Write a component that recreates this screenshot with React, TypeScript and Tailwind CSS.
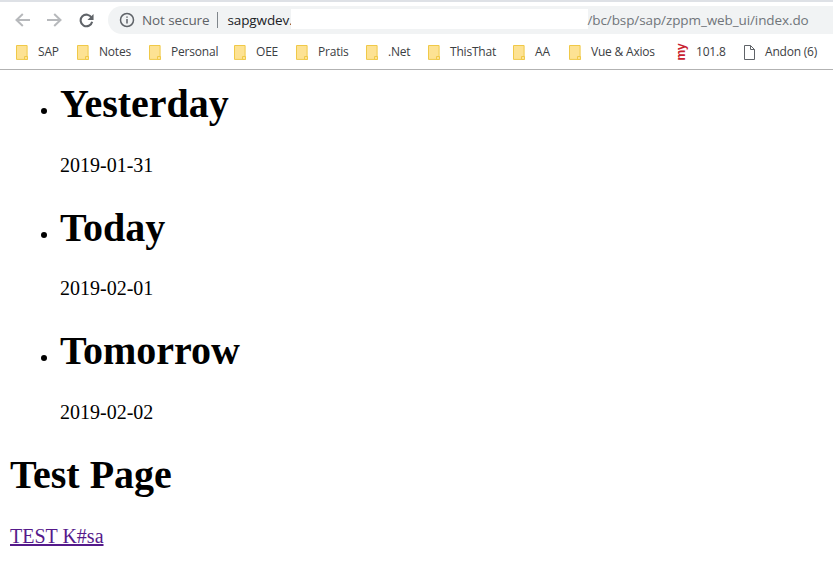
const bookmarks = [
  { name: "SAP", width: "w-[61px]" },
  { name: "Notes", width: "w-[72px]" },
  { name: "Personal", width: "w-[85px]" },
  { name: "OEE", width: "w-[62px]" },
  { name: "Pratis", width: "w-[70px]" },
  { name: ".Net", width: "w-[62px]" },
  { name: "ThisThat", width: "w-[85px]" },
  { name: "AA", width: "w-[56px]" },
];

const days = [
  { title: "Yesterday", date: "2019-01-31" },
  { title: "Today", date: "2019-02-01" },
  { title: "Tomorrow", date: "2019-02-02" },
];

const Folder = () => (
  <svg width="12" height="15" viewBox="0 0 12 15" className="shrink-0">
    <path d="M.5.5h10.6v13.9H.5z" fill="#fde293" stroke="#f0c948" />
    <path d="M8.5 11.5h3v3h-3z" fill="#fde293" stroke="#f0c948" />
  </svg>
);

const Bookmark = ({ name, width }: { name: string; width: string }) => (
  <div className={`flex items-center gap-[10px] ${width}`}>
    <Folder />
    <span>{name}</span>
  </div>
);

export default function App() {
  return (
    <div className="h-[567px] w-[833px] overflow-hidden bg-white font-['Liberation_Serif',serif] text-black">
      <header className="h-[70px] border-b border-[#b2b2b2] bg-white font-['Open_Sans',sans-serif]">
        <div className="h-[2px] bg-[#dee1e6]" />
        <div className="flex h-[36px] items-center">
          <div className="flex w-[108px] items-center pl-[15px] text-[#b7b9bc]">
            <svg width="15" height="14" viewBox="0 0 15 14" fill="none" stroke="currentColor" strokeWidth="2">
              <path d="M15 7H1.5M7.8 1 1.5 7l6.3 6" />
            </svg>
            <svg width="15" height="14" viewBox="0 0 15 14" fill="none" stroke="currentColor" strokeWidth="2" className="ml-[17px]">
              <path d="M0 7h13.5M7.2 1l6.3 6-6.3 6" />
            </svg>
            <svg width="15" height="15" viewBox="0 0 16 16" fill="none" className="ml-[17px] text-[#5f6368]">
              <path d="M13.4 5A6.2 6.2 0 1 0 14 9.3" stroke="currentColor" strokeWidth="2.2" />
              <path d="M15.5 1v6.5H9z" fill="currentColor" />
            </svg>
          </div>
          <div className="flex h-[28px] flex-1 items-center rounded-l-full bg-[#f1f3f4] pl-[11px] text-[13.5px] tracking-[-0.1px]">
            <svg width="16" height="16" viewBox="0 0 16 16" fill="none" stroke="#5f6368" strokeWidth="1.5">
              <circle cx="8" cy="8" r="6.5" />
              <path d="M8 7v4.4M8 4.4v1.4" />
            </svg>
            <span className="ml-[7px] text-[#5f6368]">Not secure</span>
            <span className="ml-[8px] h-[16px] w-px bg-[#80868b]" />
            <span className="ml-[9px] w-[64px] whitespace-nowrap text-[#202124]">sapgwdev.</span>
            <span className="mb-[2px] h-[20px] w-[297px] bg-white" />
            <span className="-ml-px whitespace-nowrap text-[#70757a]">/bc/bsp/sap/zppm_web_ui/index.do</span>
          </div>
        </div>
        <div className="flex h-[28px] items-center pl-[16px] text-[12px] tracking-[-0.2px] text-[#3c4043]">
          {bookmarks.map((b) => (
            <Bookmark key={b.name} name={b.name} width={b.width} />
          ))}
          <Bookmark name="Vue & Axios" width="w-[106px]" />
          <div className="flex w-[69px] items-center gap-[9px]">
            <span className="flex h-[14px] w-[12px] items-center justify-center">
              <span className="-rotate-90 font-['Liberation_Sans',sans-serif] text-[12px] font-bold leading-none text-[#c8202f]">my</span>
            </span>
            <span>101.8</span>
          </div>
          <div className="flex items-center gap-[10px]">
            <svg width="11" height="15" viewBox="0 0 11 15" fill="none" stroke="#5f6368">
              <path d="M.5.5h6l4 4v10H.5zM6.5.5v4h4" />
            </svg>
            <span>Andon (6)</span>
          </div>
        </div>
      </header>
      <main className="px-[10px] pt-[11px]">
        <ul className="list-disc pl-[50px]">
          {days.map((d) => (
            <li key={d.title} className="mb-[27.8px] text-[20px] leading-[23px]">
              <h1 className="text-[40px] leading-[46px] font-bold">{d.title}</h1>
              <p className="mt-[26.8px]">{d.date}</p>
            </li>
          ))}
        </ul>
        <h1 className="text-[40px] leading-[46px] font-bold">Test Page</h1>
        <p className="mt-[27px] text-[20px] leading-[23px]">
          <a href="#test" className="text-[#551a8b] underline">TEST K#sa</a>
        </p>
      </main>
    </div>
  );
}
